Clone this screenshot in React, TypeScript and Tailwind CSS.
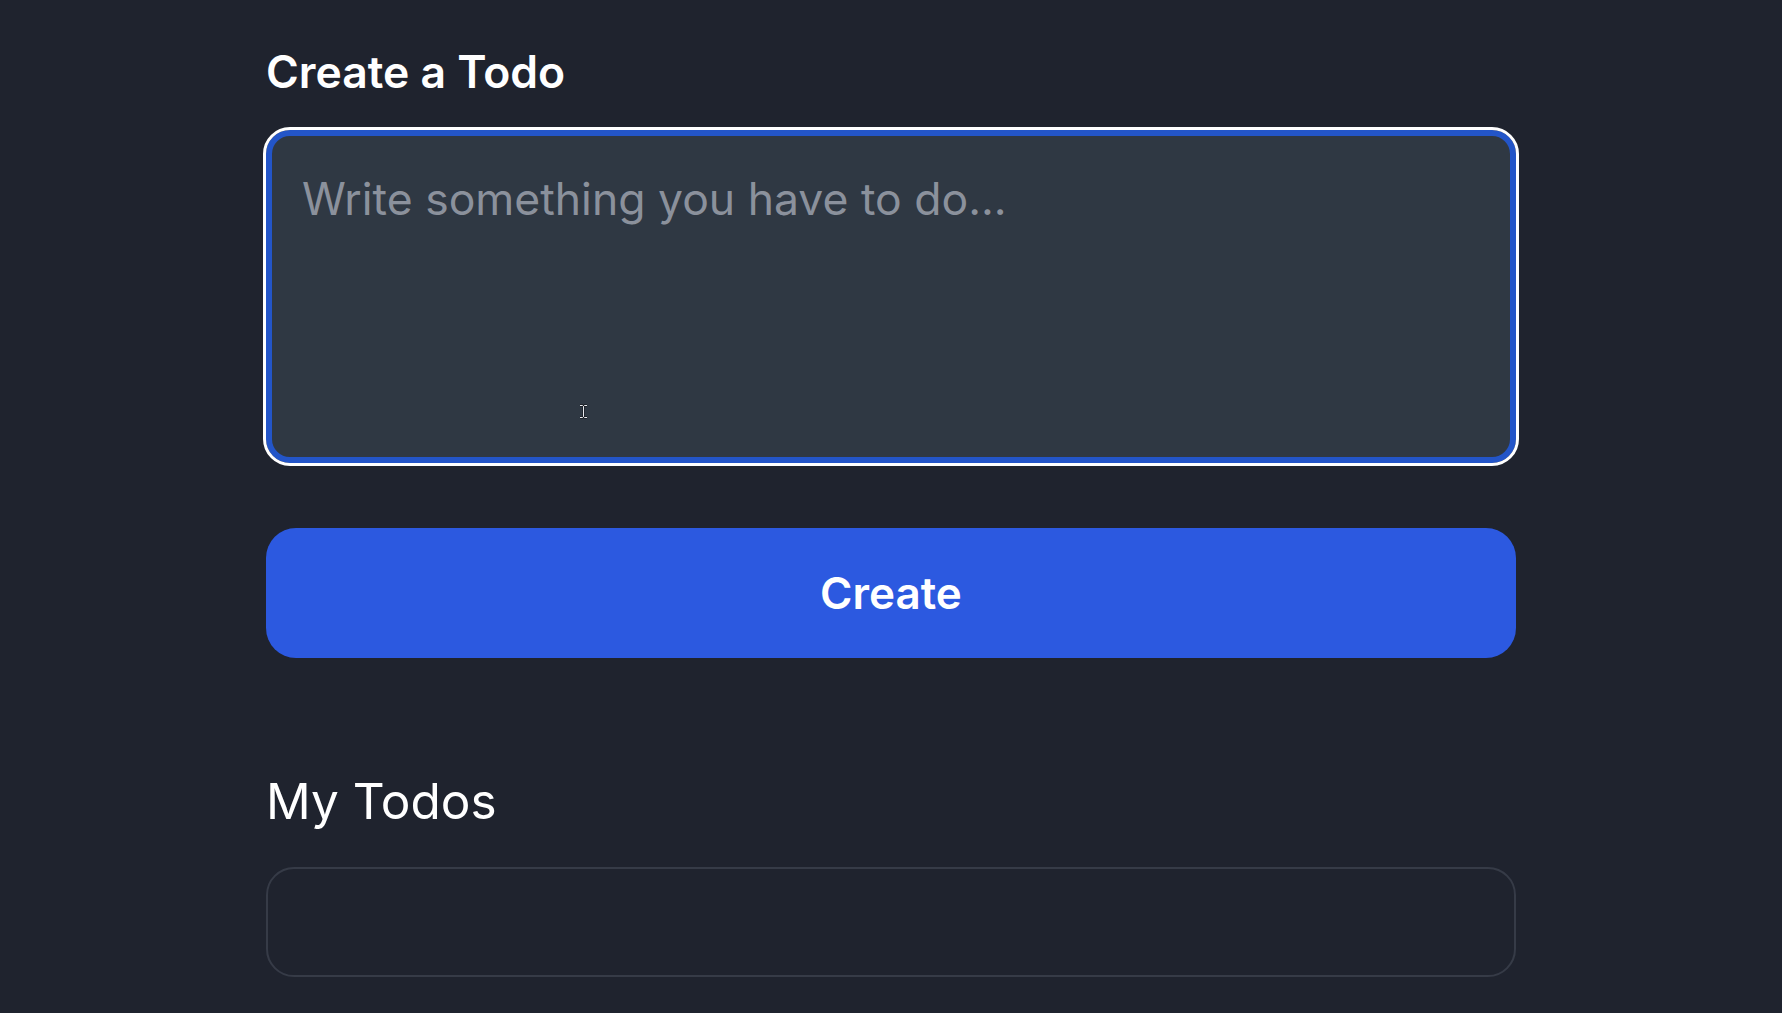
import { useState } from "react"

export default function App() {
  const [text, setText] = useState("")

  return (
    <div className="min-h-screen bg-[#1f232e] font-['Inter','Liberation_Sans',sans-serif] text-white">
      <div className="mx-auto w-[1250px] pt-[46px] pb-10">
        <h2 className="text-[44.5px] font-semibold leading-[1.2]">Create a Todo</h2>

        <div className="relative mt-[31px]">
          <textarea
            value={text}
            onChange={(e) => setText(e.target.value)}
            placeholder="Write something you have to do..."
            className="block h-[333px] w-full resize-none rounded-[24px] border-[6px] border-[#2355c8] bg-[#2f3843] px-[30px] py-[30px] text-[44.5px] leading-[1.5] text-white outline-[3px] outline-white outline-solid placeholder:text-[#8b919c]"
          />
          {/* mouse cursor */}
          <svg className="pointer-events-none absolute left-[313px] top-[274px]" width="9" height="15" viewBox="0 0 9 15">
            <path d="M1 1.5h2.5L4.5 2.5 5.5 1.5H8M4.5 2.5v10M1 13.5h2.5l1-1 1 1H8" stroke="#1a1d24" strokeWidth="2.4" fill="none" />
            <path d="M1 1.5h2.5L4.5 2.5 5.5 1.5H8M4.5 2.5v10M1 13.5h2.5l1-1 1 1H8" stroke="#e8eaee" strokeWidth="1" fill="none" />
          </svg>
        </div>

        <button className="mt-[65px] flex h-[130px] w-full items-center justify-center rounded-[30px] bg-[#2c59e0] text-[44px] font-semibold text-white">
          Create
        </button>

        <h2 className="mt-[114px] text-[49.5px] font-normal leading-[1.2]">My Todos</h2>

        <div className="mt-[35px] h-[110px] rounded-[28px] border-2 border-[#363b47]"></div>
      </div>
    </div>
  )
}
